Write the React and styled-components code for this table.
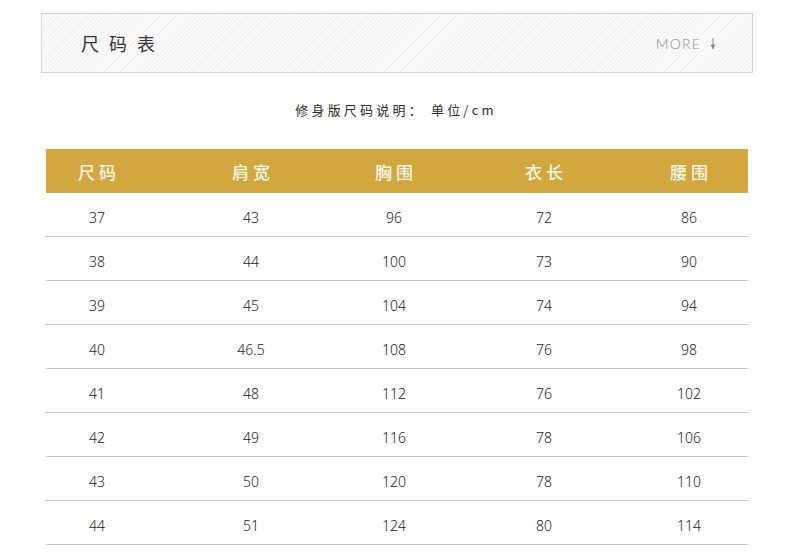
import React from 'react'
import styled, { createGlobalStyle } from 'styled-components'

const GlobalStyle = createGlobalStyle`
  html, body {
    margin: 0;
    padding: 0;
    background: #ffffff;
  }
  body {
    font-family: "Noto Sans", "Noto Sans CJK SC", sans-serif;
  }
`

const Page = styled.div`
  width: 790px;
  height: 559px;
  overflow: hidden;
  padding-top: 13px;
  box-sizing: border-box;
`

const TitleBar = styled.div`
  margin-left: 41px;
  width: 712px;
  height: 60px;
  box-sizing: border-box;
  border: 1px solid #d4d4d4;
  background: repeating-linear-gradient(135deg, #f1f1f1 0 1px, #fafafa 1px 3px);
  display: flex;
  align-items: center;
  justify-content: space-between;
  padding: 0 36px 0 39px;

  h2 {
    margin: 0;
    font-family: "Noto Sans CJK SC", sans-serif;
    font-weight: 400;
    font-size: 18px;
    letter-spacing: 10px;
    color: #333333;
  }
`

const More = styled.div`
  display: flex;
  align-items: center;
  gap: 9px;
  font-family: "Lato", "Open Sans", sans-serif;
  font-weight: 300;
  font-size: 14px;
  letter-spacing: 1.2px;
  color: #8a8a8a;
  padding-top: 1px;
`

const Note = styled.p`
  margin: 25px 0 0;
  text-align: center;
  font-family: "Noto Sans CJK SC", sans-serif;
  font-size: 13px;
  letter-spacing: 3.2px;
  color: #2a2a2a;
  line-height: 24px;
  padding-left: 2px;
`

const Table = styled.div`
  margin: 27px 0 0 46px;
  width: 702px;
`

const Row = styled.div`
  display: grid;
  grid-template-columns: 102px 206px 80px 220px 70px;
  align-items: center;
  height: ${p => (p.$head ? '44px' : '43px')};
  box-sizing: content-box;
  background: ${p => (p.$head ? '#d1a73f' : 'transparent')};
  border-bottom: ${p => (p.$head ? 'none' : '1px solid #c8c8c8')};
`

const Cell = styled.div`
  text-align: center;
  white-space: nowrap;
  font-family: ${p => (p.$head ? '"Noto Sans CJK SC", sans-serif' : '"Noto Sans", "Noto Sans CJK SC", sans-serif')};
  font-size: ${p => (p.$head ? '17px' : '14px')};
  font-weight: ${p => (p.$head ? 500 : 300)};
  letter-spacing: ${p => (p.$head ? '4px' : '0')};
  padding-left: ${p => (p.$head ? '4px' : '0')};
  color: ${p => (p.$head ? '#fff8e8' : '#222222')};
  padding-top: ${p => (p.$head ? '0' : '5px')};
`

const head = ['尺码', '肩宽', '胸围', '衣长', '腰围']
const rows = [
  ['37', '43', '96', '72', '86'],
  ['38', '44', '100', '73', '90'],
  ['39', '45', '104', '74', '94'],
  ['40', '46.5', '108', '76', '98'],
  ['41', '48', '112', '76', '102'],
  ['42', '49', '116', '78', '106'],
  ['43', '50', '120', '78', '110'],
  ['44', '51', '124', '80', '114'],
]

function ArrowDown() {
  return (
    <svg width="6" height="12" viewBox="0 0 6 12">
      <line x1="3" y1="0" x2="3" y2="11" stroke="#8a8a8a" strokeWidth="1" />
      <path d="M0.5 6.5 L3 11.5 L5.5 6.5 Z" fill="#8a8a8a" />
    </svg>
  )
}

export default function App() {
  return (
    <Page>
      <GlobalStyle />
      <TitleBar>
        <h2>尺码表</h2>
        <More>
          MORE
          <ArrowDown />
        </More>
      </TitleBar>
      <Note>修身版尺码说明： 单位/cm</Note>
      <Table>
        <Row $head>
          {head.map(h => (
            <Cell $head key={h}>{h}</Cell>
          ))}
        </Row>
        {rows.map((r, i) => (
          <Row key={i}>
            {r.map((v, j) => (
              <Cell key={j}>{v}</Cell>
            ))}
          </Row>
        ))}
      </Table>
    </Page>
  )
}
